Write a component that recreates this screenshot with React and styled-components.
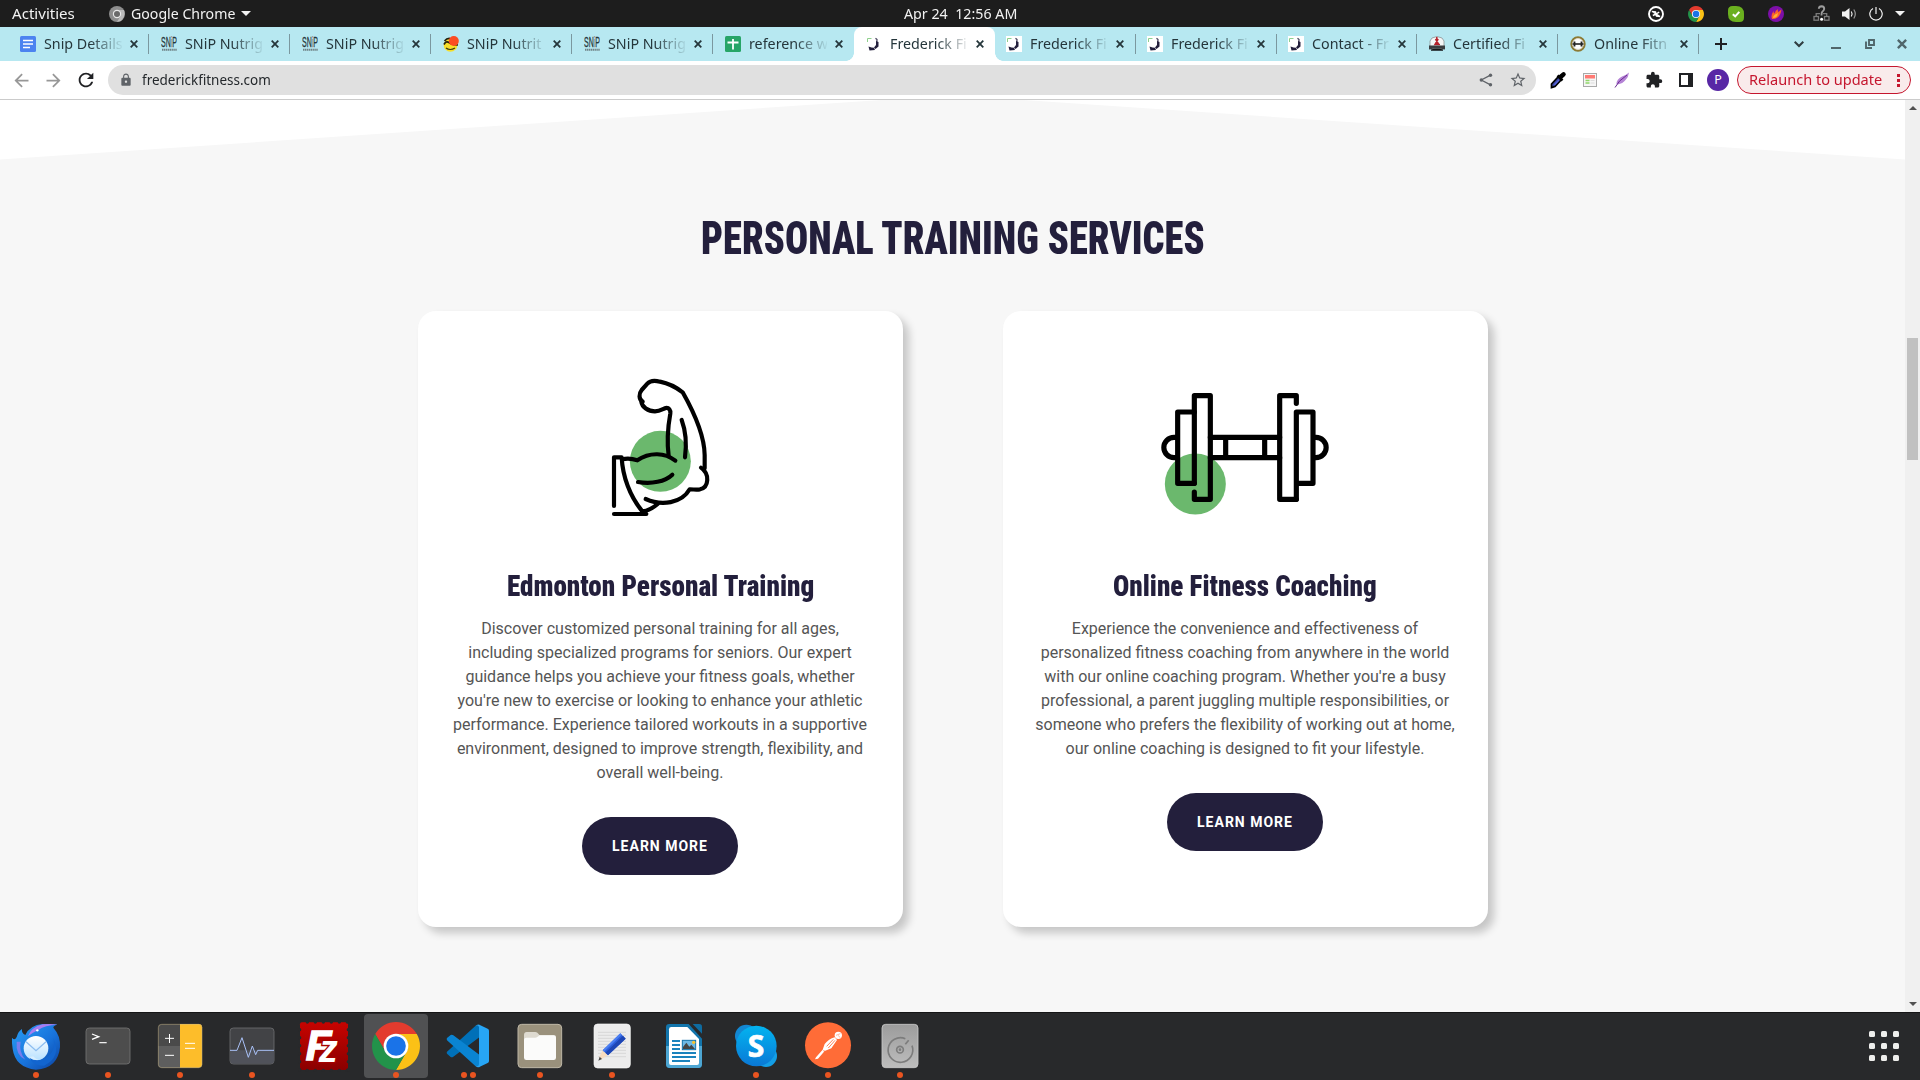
import React, { useLayoutEffect, useRef, useState } from "react";
import styled, { createGlobalStyle, css } from "styled-components";
import {
  MdArrowBack,
  MdArrowForward,
  MdRefresh,
  MdLock,
  MdStarBorder,
  MdExtension,
} from "react-icons/md";

const ui = `"Noto Sans", "Open Sans", sans-serif`;
const display = `Roboto, "Open Sans", sans-serif`;

const GlobalStyle = createGlobalStyle`
  *, *::before, *::after { box-sizing: border-box; }
  html, body { margin: 0; padding: 0; background: #1d1d1d; overflow: hidden; }
  svg { display: block; flex: none; }
  h2, h3, p { margin: 0; }
`;

/* ---------- text squeezed to a fixed measure ---------- */

const FitBox = styled.span`
  display: inline-block;
  white-space: pre;
  text-align: left;
`;
const FitInner = styled.span`
  display: inline-block;
  transform-origin: 0 50%;
`;

function Fit({ width, children }) {
  const ref = useRef(null);
  const [scale, setScale] = useState(1);
  useLayoutEffect(() => {
    const natural = ref.current.offsetWidth;
    if (natural) setScale(width / natural);
  }, [width]);
  return (
    <FitBox style={{ width }}>
      <FitInner ref={ref} style={{ transform: `scaleX(${scale})` }}>
        {children}
      </FitInner>
    </FitBox>
  );
}

/* ---------- shell ---------- */

const Desktop = styled.div`
  width: 1920px;
  height: 1080px;
  display: flex;
  flex-direction: column;
  overflow: hidden;
  font-family: ${ui};
`;

const SystemBar = styled.header`
  height: 27px;
  flex: none;
  display: grid;
  grid-template-columns: 1fr auto 1fr;
  align-items: center;
  background: #1d1d1d;
  color: #f2f2f2;
  font-size: 14px;
  line-height: 26px;
`;
const SystemLeft = styled.div`
  display: flex;
  align-items: center;
  padding-left: 12px;
`;
const AppMenu = styled.div`
  display: flex;
  align-items: center;
  margin-left: 34px;
  gap: 6px;
`;
const Caret = styled.span`
  width: 0;
  height: 0;
  border: 5px solid transparent;
  border-top: 5.5px solid #f2f2f2;
  border-bottom: 0;
`;
const SystemRight = styled.div`
  display: flex;
  justify-content: flex-end;
  align-items: center;
  padding-right: 15px;
`;
const TrayApps = styled.div`
  display: flex;
  gap: 24px;
  margin-right: 29px;
`;
const TraySystem = styled.div`
  display: flex;
  align-items: center;
  gap: 12px;
`;

/* ---------- tab strip ---------- */

const TabStrip = styled.nav`
  height: 34px;
  flex: none;
  display: flex;
  align-items: center;
  padding-left: 8.5px;
  background: #b7e8f1;
`;
const flare = css`
  content: "";
  position: absolute;
  bottom: 0;
  width: 8px;
  height: 8px;
`;
const TabItem = styled.div`
  position: relative;
  flex: none;
  width: 140.9px;
  height: 34px;
  display: flex;
  align-items: center;
  padding-left: 11.7px;
  color: #25363b;
  ${(p) =>
    p.$active &&
    css`
      background: #fff;
      border-radius: 8px 8px 0 0;
      &::before {
        ${flare}
        left: -8px;
        background: radial-gradient(circle at 0 0, transparent 7.5px, #fff 8px);
      }
      &::after {
        ${flare}
        right: -8px;
        background: radial-gradient(circle at 100% 0, transparent 7.5px, #fff 8px);
      }
    `}
`;
const TabTitle = styled.span`
  width: 78px;
  margin-left: 8px;
  overflow: hidden;
  white-space: nowrap;
  font-size: 14px;
  line-height: 22px;
  -webkit-mask-image: linear-gradient(90deg, #000 46px, transparent 80px);
  mask-image: linear-gradient(90deg, #000 46px, transparent 80px);
`;
const TabTitleText = styled.span`
  display: inline-block;
  transform: scaleX(1.02);
  transform-origin: 0 50%;
`;
const TabClose = styled.span`
  width: 10px;
  margin-left: 8px;
`;
const TabRule = styled.span`
  width: 1px;
  height: 20px;
  margin-left: auto;
  background: ${(p) => (p.$hidden ? "transparent" : "#7b989f")};
`;
const NewTab = styled.span`
  margin-left: 16px;
`;
const WindowButtons = styled.div`
  margin-left: auto;
  display: flex;
  align-items: center;
  gap: 22px;
  padding-right: 13px;
`;
const TabSearch = styled.span`
  margin-right: 3px;
`;

/* ---------- toolbar ---------- */

const Toolbar = styled.div`
  height: 39px;
  flex: none;
  display: flex;
  align-items: center;
  background: #fff;
  border-bottom: 1px solid #cbcbcb;
`;
const NavButtons = styled.div`
  display: flex;
  align-items: center;
  gap: 11px;
  width: 108px;
  padding-left: 11px;
  color: #979797;
`;
const Omnibox = styled.div`
  width: 1428px;
  height: 30px;
  border-radius: 15px;
  background: #e0e0e0;
  display: flex;
  align-items: center;
  padding: 0 9px 0 11px;
  color: #5f6368;
`;
const Url = styled.span`
  margin-left: 9px;
  margin-right: auto;
  color: #24282c;
  font-size: 14px;
  line-height: 24px;
`;
const OmniActions = styled.div`
  display: flex;
  align-items: center;
  gap: 16px;
`;
const Extensions = styled.div`
  display: flex;
  align-items: center;
  gap: 14px;
  margin-left: 13px;
  color: #202124;
`;
const Avatar = styled.span`
  width: 22px;
  height: 22px;
  margin-left: 12px;
  border-radius: 50%;
  background: #5827a5;
  color: #fff;
  font-size: 12.5px;
  line-height: 22px;
  text-align: center;
`;
const Relaunch = styled.div`
  height: 28px;
  width: 174px;
  margin-left: 8px;
  padding: 0 10px 0 11px;
  display: flex;
  align-items: center;
  justify-content: space-between;
  border: 1px solid #c5162e;
  border-radius: 14px;
  background: #f9ebeb;
  color: #c5162e;
  font-size: 14px;
  line-height: 26px;
`;

/* ---------- page ---------- */

const Viewport = styled.div`
  height: 912px;
  flex: none;
  display: flex;
`;
const Page = styled.main`
  width: 1905px;
  height: 912px;
  background: #f7f7f7;
  display: flex;
  flex-direction: column;
  align-items: center;
`;
const Divider = styled.div`
  width: 100%;
  height: 60px;
  flex: none;
  background: #fff;
  clip-path: polygon(0 0, 0 59.5px, 952.5px -4.8px, 1905px 59.5px, 1905px 0);
`;
const SectionTitle = styled.h2`
  margin-top: 48px;
  height: 60px;
  padding-left: 1px;
  color: #231f3c;
  font: 900 46.5px/60px ${display};
  font-stretch: 75%;
`;
const Cards = styled.section`
  display: flex;
  gap: 100px;
  margin-top: 43px;
`;
const Card = styled.article`
  width: 485px;
  height: 616px;
  padding-top: 39px;
  border-radius: 18px;
  background: #fff;
  box-shadow: 6px 6px 9px rgba(0, 0, 0, 0.2);
  display: flex;
  flex-direction: column;
  align-items: center;
`;
const CardTitle = styled.h3`
  margin-top: 28px;
  height: 36px;
  color: #231f3c;
  font: 900 29.5px/36px ${display};
  font-stretch: 75%;
`;
const CardText = styled.p`
  margin-top: 13px;
  color: #555;
  font: 400 16px/24px Roboto, sans-serif;
  text-align: center;
  white-space: nowrap;
`;
const Button = styled.a`
  margin-top: 32px;
  width: 156px;
  height: 58px;
  border-radius: 29px;
  background: #231f3c;
  color: #fff;
  font: 700 14px/59px Roboto, sans-serif;
  letter-spacing: 1px;
  text-align: center;
`;

const ScrollTrack = styled.div`
  width: 15px;
  height: 912px;
  display: flex;
  flex-direction: column;
  align-items: center;
  background: #f0f0f0;
`;
const ScrollArrow = styled.span`
  border: 4px solid transparent;
  ${(p) =>
    p.$down
      ? css`
          border-bottom: 0;
          border-top-color: #505050;
          margin-top: auto;
          margin-bottom: 6px;
        `
      : css`
          border-top: 0;
          border-bottom-color: #505050;
          margin-top: 6px;
        `}
`;
const ScrollThumb = styled.span`
  width: 11px;
  height: 122px;
  margin-top: 228px;
  background: #c1c1c1;
`;

/* ---------- dock ---------- */

const Dock = styled.footer`
  height: 68px;
  flex: none;
  display: flex;
  align-items: flex-start;
  gap: 8px;
  padding: 1px 18px 0 4px;
  border-top: 1px solid #151516;
  background: #28292b;
`;
const DockSlot = styled.div`
  position: relative;
  width: 64px;
  height: 64px;
  border-radius: 4px;
  background: ${(p) => (p.$active ? "#505153" : "transparent")};
`;
const RunDots = styled.div`
  position: absolute;
  left: 0;
  right: 0;
  bottom: 0;
  display: flex;
  justify-content: center;
  gap: 3px;
`;
const RunDot = styled.span`
  width: 6px;
  height: 6px;
  border-radius: 50%;
  background: #e95420;
`;
const AppGrid = styled.div`
  margin: 17px 3px 0 auto;
  display: grid;
  grid-template-columns: repeat(3, 6px);
  gap: 6px;
`;
const AppGridDot = styled.span`
  height: 6px;
  border-radius: 1.5px;
  background: #eeeeec;
`;

/* ---------- drawings ---------- */

function ChromeMark() {
  const d = "M62.35 -36 A72 72 0 0 0 -62.35 -36 L-31.2 18 A36 36 0 0 1 0 -36 Z";
  return (
    <g>
      <path d={d} fill="#e33b2e" />
      <path d={d} fill="#fbc116" transform="rotate(120)" />
      <path d={d} fill="#22934a" transform="rotate(240)" />
      <circle r="37" fill="#fff" />
      <circle r="29.5" fill="#1a73e8" />
    </g>
  );
}

const faviconSvg = { width: 16, height: 16, viewBox: "0 0 16 16" };

const favicons = {
  docs: (
    <svg {...faviconSvg}>
      <rect width="16" height="16" rx="1.5" fill="#4c83f0" />
      <path d="M3 4.5h10M3 8h10M3 11.5h7" stroke="#fff" strokeWidth="1.6" />
    </svg>
  ),
  snip: (
    <svg {...faviconSvg}>
      <text x="0" y="11.300" fontSize="15.500" fontFamily="Liberation Sans, sans-serif" fill="#26363a" stroke="#26363a" strokeWidth=".3" textLength="16" lengthAdjust="spacingAndGlyphs">
        SN<tspan fill="#49a795" stroke="#e2545c">i</tspan>P
      </text>
      <path d="M1 13.700h15" stroke="#6f8286" strokeWidth="2" strokeDasharray="1.4 .5" />
    </svg>
  ),
  burger: (
    <svg {...faviconSvg}>
      <circle cx="7.5" cy="9" r="6.800" fill="#f6df2a" />
      <path d="M1.500 5Q4 2 7 2.500M1 8.500q2-4 5-2t9 2.500" stroke="#23210f" strokeWidth="1.700" fill="none" />
      <path d="M3 12q4 3 9 0" stroke="#3c3810" strokeWidth="1.200" fill="none" />
      <circle cx="10.800" cy="5" r="5" fill="#fb4d23" />
    </svg>
  ),
  sheets: (
    <svg {...faviconSvg}>
      <rect width="16" height="16" rx="1.5" fill="#27a567" />
      <path d="M2.500 6.500h11M8 3v10.500" stroke="#fff" strokeWidth="1.8" />
    </svg>
  ),
  fred: (
    <svg {...faviconSvg}>
      <rect width="16" height="16" fill="#fff" />
      <path d="M1.500 6V2.500H5.500" stroke="#8fd08c" strokeWidth="1" fill="none" />
      <path d="M9.500 2.200L11 3.500L10.800 6L11 9" stroke="#4b4860" strokeWidth="1.300" fill="none" />
      <path d="M10 5L12.500 6L12.500 10.500L9.500 13L8 11.500L10 9Z" fill="#231f3c" />
      <path d="M2.500 10.500L5.500 11.500L8 11.800L9 14L3.500 14.500Z" fill="#231f3c" />
    </svg>
  ),
  certified: (
    <svg {...faviconSvg}>
      <path d="M1 5l2-3 5-1.500L13 2l2 3v8H1z" fill="#f4f6f6" stroke="#8b9496" strokeWidth=".8" />
      <path d="M7.800 1v7M6.500 3l3 5M9.200 3L6 8.500H11" stroke="#b5202a" strokeWidth="1.500" fill="none" />
      <path d="M0 9.500h16v4q-8-2-16 0z" fill="#3a3d40" />
      <path d="M2 13.500q6-2 12 0v1.200H2z" fill="#151617" />
    </svg>
  ),
  online: (
    <svg {...faviconSvg}>
      <circle cx="8" cy="8" r="6.700" fill="#fff" stroke="#8c7a34" strokeWidth="2" />
      <circle cx="8" cy="8" r="5.400" fill="none" stroke="#d9d5c6" strokeWidth=".8" />
      <path d="M2.500 8h11" stroke="#222" strokeWidth="1.600" />
      <path d="M4.500 5.500v5M11.500 5.500v5" stroke="#222" strokeWidth="1.800" />
    </svg>
  ),
};

function Cross({ size = 8, weight = 1.8, color = "#25363b" }) {
  return (
    <svg width={size} height={size} viewBox="0 0 8 8">
      <path d="M.7.7l6.600 6.600M7.300.7L.7 7.300" stroke={color} strokeWidth={weight} />
    </svg>
  );
}

function BicepArt() {
  return (
    <svg width="200" height="190" viewBox="0 0 600 570">
      <circle cx="301" cy="334" r="91.500" fill="#6bb86d" />
      <g fill="none" stroke="#000" strokeWidth="12.500" strokeLinecap="round" strokeLinejoin="round">
        <path d="M248 155C236 148 236 131 245 120L262 101C270 92 285 91 300 95C325 100 350 113 368 127C398 180 433 255 434 315V355" />
        <path d="M244 155C246 171 264 184 285 184C300 184 308 177 317 174C327 172 332 181 331 190C322 240 321 280 326 318" />
        <path d="M365 210C378 245 380 285 375 322" />
        <path d="M187 328C200 325 217 326 232 331C270 305 315 308 346 332" />
        <path d="M234 396C275 403 315 395 337 374" />
        <path d="M423 353C450 372 447 412 420 418C408 420 402 418 389 418C365 460 305 469 257 447" />
        <path d="M162 468V322H185C188 380 210 440 247 484C265 482 280 473 293 462" />
        <path d="M162 492H259L247 484" />
      </g>
    </svg>
  );
}

function DumbbellArt() {
  return (
    <svg width="210" height="190" viewBox="0 -60 630 570">
      <circle cx="166" cy="342" r="91.500" fill="#6bb86d" />
      <g fill="none" stroke="#000" strokeWidth="15.500" strokeLinecap="round" strokeLinejoin="round">
        <path d="M163 126H113V340H163" />
        <path d="M163 340V77H211V388H163V366" />
        <path d="M211 202H419M211 263H419M257 202V263M374 202V263" />
        <path d="M469 100V77H419V388H469" />
        <path d="M469 388V126H519V340H469" />
        <path d="M108 202H102A30.500 30.500 0 0 0 102 263H108" />
        <path d="M522 202H528A30.500 30.500 0 0 1 528 263H522" />
      </g>
    </svg>
  );
}

const stampHoles = [0, 1, 2, 3, 4, 5].map((i) => 912 + i * 24);

const dockApps = [
  {
    id: "thunderbird",
    dots: 1,
    box: "12 27 192 192",
    art: (
      <>
        <defs>
          <linearGradient id="tbBody" x1="0" y1="0" x2="1" y2="1">
            <stop offset="0" stopColor="#2aa0f5" />
            <stop offset=".55" stopColor="#1873dc" />
            <stop offset="1" stopColor="#0c429f" />
          </linearGradient>
          <linearGradient id="tbMail" x1="0" y1="0" x2="0" y2="1">
            <stop offset="0" stopColor="#fff" />
            <stop offset="1" stopColor="#b6e0ff" />
          </linearGradient>
        </defs>
        <path d="M36 98Q44 108 50 96Q54 80 66 72Q64 84 76 90Q90 60 128 57L172 58Q160 64 160 68Q182 92 180 126Q174 190 108 194Q46 188 38 132Q35 112 36 98Z" fill="url(#tbBody)" />
        <path d="M84 94Q94 66 128 58Q152 55 172 59Q134 60 116 74Q98 82 84 94Z" fill="#a77df0" />
        <path d="M50 110Q46 150 76 164Q56 140 62 110Z" fill="#8f7cf0" opacity=".8" />
        <circle cx="108" cy="130" r="37" fill="url(#tbMail)" />
        <path d="M78 110L108 137L138 110" fill="none" stroke="#8dbdf0" strokeWidth="4" />
        <path d="M88 158Q108 172 136 160Q170 138 160 100Q186 156 132 182Q100 182 88 158Z" fill="#1265cf" />
        <path d="M88 156Q98 166 116 165Q104 160 100 154Z" fill="#d9efff" />
        <circle cx="112" cy="76" r="3.500" fill="#fff" />
      </>
    ),
  },
  {
    id: "terminal",
    dots: 1,
    box: "228 27 192 192",
    art: (
      <>
        <rect x="258" y="69" width="132" height="108" rx="10" fill="#4d4d4d" stroke="#737373" strokeWidth="2.500" />
        <path d="M276 87L296 95L276 103" fill="none" stroke="#fff" strokeWidth="4" />
        <path d="M298 113H320" stroke="#fff" strokeWidth="3.500" />
      </>
    ),
  },
  {
    id: "calculator",
    dots: 1,
    box: "444 27 192 192",
    art: (
      <>
        <rect x="475" y="58" width="131" height="130" rx="10" fill="#4a4a4a" />
        <path d="M475 123H540V188H485Q475 188 475 178Z" fill="#5e5e5e" />
        <path d="M540 57H596Q606 57 606 67V178Q606 188 596 188H540Z" fill="#fdbd2a" />
        <rect x="475" y="58" width="131" height="130" rx="10" fill="none" stroke="#c9b98a" strokeOpacity=".6" strokeWidth="2.500" />
        <path d="M495 100H522M508.500 87V114M495 151H522M555 115H585M555 130H585" stroke="#fff" strokeWidth="3" />
      </>
    ),
  },
  {
    id: "monitor",
    dots: 1,
    box: "660 27 192 192",
    art: (
      <>
        <rect x="690" y="69" width="132" height="108" rx="10" fill="#424346" stroke="#6c6d70" strokeWidth="2.500" />
        <path d="M692 136H822V167Q822 176 812 176H700Q691 176 691 167Z" fill="#50525a" />
        <path d="M690 136H711L726 98L745 157L757 123L767 149L773 136H822" fill="none" stroke="#a9c1f7" strokeWidth="3" />
      </>
    ),
  },
  {
    id: "filezilla",
    dots: 0,
    box: "876 27 192 192",
    art: (
      <>
        <defs>
          <linearGradient id="fzRed" x1="0" y1="0" x2="0" y2="1">
            <stop offset="0" stopColor="#c70300" />
            <stop offset="1" stopColor="#8b0000" />
          </linearGradient>
        </defs>
        <rect x="900" y="52" width="144" height="143" rx="6" fill="url(#fzRed)" />
        {stampHoles.map((v) => (
          <g key={v} fill="#28292b">
            <circle cx={v + 10} cy="51" r="5" />
            <circle cx={v + 10} cy="196" r="5" />
            <circle cx="899" cy={v - 838} r="5" />
            <circle cx="1045" cy={v - 838} r="5" />
          </g>
        ))}
        <text x="917" y="164" fontFamily="Liberation Sans, sans-serif" fontSize="126" fontWeight="700" fontStyle="italic" fill="#fff" stroke="#fff" strokeWidth="4">F</text>
        <text x="956" y="172" fontFamily="Liberation Sans, sans-serif" fontSize="114" fontWeight="700" fontStyle="italic" fill="#fff" stroke="#a50200" strokeWidth="8" paintOrder="stroke">z</text>
      </>
    ),
  },
  {
    id: "chrome",
    dots: 1,
    active: true,
    box: "1092 27 192 192",
    art: (
      <g transform="translate(1188 123)">
        <ChromeMark />
      </g>
    ),
  },
  {
    id: "code",
    dots: 2,
    box: "1308 27 192 192",
    art: (
      <>
        <path d="M1341 146L1352 156Q1356 158 1360 155L1439 96V59L1426 63L1341 140Q1339 143 1341 146Z" fill="#0070b8" />
        <path d="M1341 99L1352 90Q1356 88 1360 91L1439 150V187L1426 183L1341 106Q1339 102 1341 99Z" fill="#0a84d2" />
        <path d="M1438 59L1463 71Q1467 73 1467 77V168Q1467 172 1463 174L1438 186Q1431 188 1426 183Q1437 186 1437 177V67Q1436 59 1426 63Q1431 57 1438 59Z" fill="#27a5f5" />
      </>
    ),
  },
  {
    id: "files",
    dots: 1,
    box: "84 27 192 192",
    art: (
      <>
        <rect x="114" y="58" width="131" height="130" rx="11" fill="#9a917c" stroke="#beb7a6" strokeWidth="3" />
        <path d="M132 90Q132 81 140 81H166Q172 81 175 86L179 91H221Q228 91 228 98V130H132Z" fill="#dedad0" />
        <path d="M132 104Q132 98 139 98H166Q171 98 175 94L178 91H221Q228 91 228 98V158Q228 165 221 165H139Q132 165 132 158Z" fill="#fbfbfa" />
      </>
    ),
  },
  {
    id: "editor",
    dots: 1,
    box: "300 27 192 192",
    art: (
      <>
        <rect x="342" y="57" width="109" height="132" rx="11" fill="#ececec" stroke="#fafafa" strokeWidth="2" />
        <path d="M354 82H438M354 91H438M354 100H438M354 109H438M354 118H438M354 127H438M354 136H438M354 145H438M354 155H438" stroke="#cfcfcf" strokeWidth="2" />
        <path d="M358 155L368 136L384 150L362 164Z" fill="#f8dcc0" />
        <path d="M355 167L359 155L366 162Z" fill="#4a4a4a" />
        <path d="M368 136L421 85L437 101L384 151Z" fill="#2c5fdc" />
        <path d="M376 143L429 92L437 101L384 151Z" fill="#1e46b4" />
        <path d="M368 136L421 85L425 89L372 140Z" fill="#4d80f2" />
      </>
    ),
  },
  {
    id: "writer",
    dots: 0,
    box: "516 27 192 192",
    art: (
      <>
        <path d="M568 57H626L666 101V178Q666 189 655 189H569Q558 189 558 178V67Q558 57 568 57Z" fill="#1274ab" />
        <path d="M558 123H666V178Q666 189 655 189H569Q558 189 558 178Z" fill="#4da6d3" />
        <path d="M574 66H622L657 102V174Q657 180 651 180H573Q567 180 567 174V73Q567 66 574 66Z" fill="#fff" />
        <path d="M638 57H658Q666 57 666 65V86Z" fill="#0e6ba0" />
        <path d="M576 108H600M576 120H600M576 132H600M576 144H648M576 156H648M576 168H630" stroke="#1b83bd" strokeWidth="5.500" />
        <rect x="607" y="106" width="40" height="28" fill="#6db8e4" stroke="#1473ab" strokeWidth="3" />
        <path d="M609 132V126L619 113L628 125L634 119L645 132Z" fill="#454545" />
        <circle cx="641" cy="112" r="5" fill="#f7c32e" />
      </>
    ),
  },
  {
    id: "skype",
    dots: 1,
    box: "732 27 192 192",
    art: (
      <>
        <defs>
          <linearGradient id="skyBlue" x1="0" y1="0" x2="0" y2="1">
            <stop offset="0" stopColor="#03b4f0" />
            <stop offset="1" stopColor="#0a78d6" />
          </linearGradient>
        </defs>
        <circle cx="799" cy="93" r="34" fill="#1387d2" />
        <circle cx="858" cy="153" r="33" fill="#139ee6" />
        <circle cx="829" cy="123" r="61" fill="url(#skyBlue)" />
        <text x="828" y="155" textAnchor="middle" fontFamily="Open Sans, sans-serif" fontSize="90" fontWeight="700" fill="#fff" stroke="#fff" strokeWidth="2">S</text>
      </>
    ),
  },
  {
    id: "postman",
    dots: 1,
    box: "948 27 192 192",
    art: (
      <>
        <circle cx="1044" cy="121" r="69" fill="#ff6c37" />
        <circle cx="1075" cy="91" r="11" fill="#fff" />
        <path d="M1068 91L1081 86M1075 91L1080 98" stroke="#ff6c37" strokeWidth="1.500" />
        <path d="M1064 97L1071 105L1054 130L1034 138L1014 161L1005 163L1008 157L1028 134L1034 117Q1046 102 1064 97Z" fill="#fff" />
        <path d="M1060 103L1040 124M1065 106L1045 129M1030 137L1037 140" stroke="#ff6c37" strokeWidth="2.500" />
      </>
    ),
  },
  {
    id: "disks",
    dots: 1,
    box: "1164 27 192 192",
    art: (
      <>
        <defs>
          <linearGradient id="diskGrey" x1="0" y1="0" x2="0" y2="1">
            <stop offset="0" stopColor="#9c9c9c" />
            <stop offset="1" stopColor="#bdbdbd" />
          </linearGradient>
        </defs>
        <rect x="1206" y="58" width="108" height="130" rx="11" fill="url(#diskGrey)" stroke="#c9c9c9" strokeWidth="2.500" />
        <g fill="none" stroke="#7c7c7c" strokeWidth="5">
          <path d="M1296 122A37 37 0 1 1 1276 101" />
          <path d="M1276 118L1286 106" />
          <circle cx="1260" cy="134" r="10" />
        </g>
        <circle cx="1260" cy="134" r="4" fill="#7c7c7c" />
      </>
    ),
  },
];

/* ---------- content ---------- */

const tabs = [
  { icon: "docs", title: "Snip Details" },
  { icon: "snip", title: "SNiP Nutrig" },
  { icon: "snip", title: "SNiP Nutrig" },
  { icon: "burger", title: "SNiP Nutrit" },
  { icon: "snip", title: "SNiP Nutrig" },
  { icon: "sheets", title: "reference w", noRule: true },
  { icon: "fred", title: "Frederick Fi", active: true },
  { icon: "fred", title: "Frederick Fi" },
  { icon: "fred", title: "Frederick Fi" },
  { icon: "fred", title: "Contact - Fr" },
  { icon: "certified", title: "Certified Fi" },
  { icon: "online", title: "Online Fitn" },
];

const services = [
  {
    art: <BicepArt />,
    title: "Edmonton Personal Training",
    titleWidth: 307,
    lines: [
      "Discover customized personal training for all ages,",
      "including specialized programs for seniors. Our expert",
      "guidance helps you achieve your fitness goals, whether",
      "you're new to exercise or looking to enhance your athletic",
      "performance. Experience tailored workouts in a supportive",
      "environment, designed to improve strength, flexibility, and",
      "overall well-being.",
    ],
  },
  {
    art: <DumbbellArt />,
    title: "Online Fitness Coaching",
    titleWidth: 264,
    lines: [
      "Experience the convenience and effectiveness of",
      "personalized fitness coaching from anywhere in the world",
      "with our online coaching program. Whether you're a busy",
      "professional, a parent juggling multiple responsibilities, or",
      "someone who prefers the flexibility of working out at home,",
      "our online coaching is designed to fit your lifestyle.",
    ],
  },
];

function SystemTray() {
  return (
    <SystemRight>
      <TrayApps>
        <svg width="16" height="16" viewBox="0 0 16 16">
          <circle cx="8" cy="8" r="7" fill="none" stroke="#fff" strokeWidth="1.900" />
          <path d="M3.800 5.500L7.500 5.800L8 8L4.800 9.500M12.200 10.500L8.500 10.200L8 8L11.200 6.200M4.200 5.500L12 10.700" stroke="#fff" strokeWidth="1.400" fill="none" />
        </svg>
        <svg width="16" height="16" viewBox="-72 -72 144 144">
          <ChromeMark />
        </svg>
        <svg width="16" height="16" viewBox="0 0 16 16">
          <path d="M0 4.500Q0 0 4.500 0H8Q16 0 16 8V11.500Q16 16 11.500 16H8Q0 16 0 8Z" fill="#6bb01f" />
          <path d="M4.800 8.200L7.200 10.300L11.300 5.800" stroke="#fff" strokeWidth="2" fill="none" />
        </svg>
        <svg width="16" height="16" viewBox="0 0 16 16">
          <circle cx="8" cy="8" r="8" fill="#7d0fa8" />
          <path d="M4 13Q2.500 9.500 5.500 5Q5.500 7 6.500 7.500Q7.500 4 10 3Q9.500 5 10.200 6Q11.500 5 13.500 3.500Q12.500 9.500 9.500 11.500Q7 13.200 4 13Z" fill="#f9622a" />
          <path d="M5 12Q5 9.500 7 8.500Q9 8 10 6.500Q10 10 7.500 11.500Z" fill="#ffb52e" />
        </svg>
      </TrayApps>
      <TraySystem>
        <svg width="17" height="17" viewBox="0 0 17 17">
          <g fill="none" stroke="#7c7c7c" strokeWidth="1.300">
            <rect x="1" y="11.500" width="4.500" height="3.700" />
            <rect x="11.500" y="11.500" width="4.500" height="3.700" />
            <path d="M3.200 11.500V8.700H7M10 8.700H13.700V11.500" />
          </g>
          <path d="M5.800 3.800Q6 1.200 8.600 1.200Q11.300 1.400 11.200 4Q11 5.600 9.300 6.700Q8.500 7.400 8.500 10.500" fill="none" stroke="#9d9d9d" strokeWidth="1.900" />
          <circle cx="8.600" cy="14.300" r="1.500" fill="#fff" />
        </svg>
        <svg width="15" height="14" viewBox="0 0 15 14">
          <path d="M0 4.500H3L7.500 1V13L3 9.500H0Z" fill="#f2f2f2" />
          <path d="M9.300 4.500Q10.900 7 9.300 9.500" fill="none" stroke="#f2f2f2" strokeWidth="1.200" />
          <path d="M11.800 2.500Q14.800 7 11.800 11.500" fill="none" stroke="#9a9a9a" strokeWidth="1.200" />
        </svg>
        <svg width="14" height="14" viewBox="0 0 14 14">
          <path d="M4 1.500A6.200 6.200 0 1 0 10 1.500M7 0V7" fill="none" stroke="#f2f2f2" strokeWidth="1.200" />
        </svg>
        <Caret />
      </TraySystem>
    </SystemRight>
  );
}

export default function App() {
  return (
    <Desktop>
      <GlobalStyle />
      <SystemBar>
        <SystemLeft>
          <Fit width={62.5}>Activities</Fit>
          <AppMenu>
            <svg width="16" height="16" viewBox="0 0 16 16">
              <circle cx="8" cy="8" r="8" fill="#8d8d8d" />
              <path d="M8 4H15Q17 10 12 15L8 16L11.500 10Z" fill="#b9b9b9" />
              <circle cx="8" cy="8" r="4.200" fill="#e8e8e8" />
              <circle cx="8" cy="8" r="3" fill="#6a6a6a" />
            </svg>
            <Fit width={104}>Google Chrome</Fit>
            <Caret />
          </AppMenu>
        </SystemLeft>
        <Fit width={113}>{"Apr 24  12:56 AM"}</Fit>
        <SystemTray />
      </SystemBar>

      <TabStrip>
        {tabs.map((t, i) => (
          <TabItem key={i} $active={t.active}>
            {favicons[t.icon]}
            <TabTitle>
              <TabTitleText>{t.title}</TabTitleText>
            </TabTitle>
            <TabClose>
              <Cross />
            </TabClose>
            <TabRule $hidden={t.active || t.noRule} />
          </TabItem>
        ))}
        <NewTab>
          <svg width="12" height="12" viewBox="0 0 12 12">
            <path d="M6 0V12M0 6H12" stroke="#202124" strokeWidth="2" />
          </svg>
        </NewTab>
        <WindowButtons>
          <TabSearch>
            <svg width="10" height="10" viewBox="0 0 10 10">
              <path d="M.7 2.700L5 7L9.300 2.700" fill="none" stroke="#2f3d41" strokeWidth="2" />
            </svg>
          </TabSearch>
          <svg width="14" height="12" viewBox="0 0 14 12">
            <path d="M2 10H12" stroke="#50666b" strokeWidth="2" />
          </svg>
          <svg width="10" height="10" viewBox="0 0 10 10">
            <path d="M4 1H9V6H4Z M1 2.500V9H7" fill="none" stroke="#50666b" strokeWidth="1.900" />
          </svg>
          <Cross size={10} weight={1.900} color="#50666b" />
        </WindowButtons>
      </TabStrip>

      <Toolbar>
        <NavButtons>
          <MdArrowBack size={21} />
          <MdArrowForward size={21} />
          <MdRefresh size={22} color="#202124" />
        </NavButtons>
        <Omnibox>
          <MdLock size={14} />
          <Url>
            <Fit width={129}>frederickfitness.com</Fit>
          </Url>
          <OmniActions>
            <svg width="14" height="14" viewBox="0 0 14 14">
              <path d="M11.500 2.200L2.300 7L11.500 11.800" fill="none" stroke="#5f6368" strokeWidth="1.300" />
              <circle cx="11.500" cy="2.300" r="1.700" fill="#5f6368" />
              <circle cx="2.300" cy="7" r="1.700" fill="#5f6368" />
              <circle cx="11.500" cy="11.700" r="1.700" fill="#5f6368" />
            </svg>
            <MdStarBorder size={18} />
          </OmniActions>
        </Omnibox>
        <Extensions>
          <svg width="18" height="18" viewBox="0 0 18 18">
            <path d="M2.500 13L9.500 5.500L12.500 8.500L6 15.500L2.500 16.500Z" fill="#39439c" stroke="#000" strokeWidth="1.700" />
            <path d="M4.500 13.500L9.500 8.500L10.500 9.500L6 14.300Z" fill="#5563d8" />
            <path d="M8.500 4.500L13.500 9.500" stroke="#000" strokeWidth="2.500" />
            <path d="M11.500 6L14.500 3.300" stroke="#000" strokeWidth="4.500" strokeLinecap="round" />
          </svg>
          <svg width="18" height="18" viewBox="0 0 18 18">
            <rect x="2.500" y="2.500" width="13" height="13" fill="#f6f6f6" stroke="#a9a9a9" />
            <rect x="4" y="4" width="10" height="3.500" fill="#ff7a74" />
            <path d="M4.500 9.500H8.500M4.500 12H8.500" stroke="#8fd668" strokeWidth="1.300" />
            <path d="M9.500 9.500H13.500M9.500 12H13.500" stroke="#dcdcdc" strokeWidth="1" />
          </svg>
          <svg width="18" height="18" viewBox="0 0 18 18">
            <path d="M3.500 13Q3.500 8 9 5.500Q14 3.500 16 1.500Q15.500 6 12.500 9Q10 12.500 4.500 13.500Z" fill="#b583d6" />
            <path d="M2 16.500Q5 10 14 4" fill="none" stroke="#6b2e91" strokeWidth="1" />
          </svg>
          <MdExtension size={18} />
          <svg width="18" height="18" viewBox="0 0 18 18">
            <path d="M3 3H15V15H3Z" fill="#fff" stroke="#202124" strokeWidth="2" />
            <path d="M11 3H15V15H11Z" fill="#202124" />
          </svg>
        </Extensions>
        <Avatar>P</Avatar>
        <Relaunch>
          <Fit width={133}>Relaunch to update</Fit>
          <svg width="3" height="13" viewBox="0 0 3 13">
            <path d="M0 0H3V3H0ZM0 5H3V8H0ZM0 10H3V13H0Z" fill="#c5162e" />
          </svg>
        </Relaunch>
      </Toolbar>

      <Viewport>
        <Page>
          <Divider />
          <SectionTitle>
            <Fit width={504}>PERSONAL TRAINING SERVICES</Fit>
          </SectionTitle>
          <Cards>
            {services.map((s) => (
              <Card key={s.title}>
                {s.art}
                <CardTitle>
                  <Fit width={s.titleWidth}>{s.title}</Fit>
                </CardTitle>
                <CardText>
                  {s.lines.map((line) => (
                    <React.Fragment key={line}>
                      {line}
                      <br />
                    </React.Fragment>
                  ))}
                </CardText>
                <Button>LEARN MORE</Button>
              </Card>
            ))}
          </Cards>
        </Page>
        <ScrollTrack>
          <ScrollArrow />
          <ScrollThumb />
          <ScrollArrow $down />
        </ScrollTrack>
      </Viewport>

      <Dock>
        {dockApps.map((app) => (
          <DockSlot key={app.id} $active={app.active}>
            <svg width="64" height="64" viewBox={app.box}>
              {app.art}
            </svg>
            <RunDots>
              {Array.from({ length: app.dots }, (_, i) => (
                <RunDot key={i} />
              ))}
            </RunDots>
          </DockSlot>
        ))}
        <AppGrid>
          {Array.from({ length: 9 }, (_, i) => (
            <AppGridDot key={i} />
          ))}
        </AppGrid>
      </Dock>
    </Desktop>
  );
}
